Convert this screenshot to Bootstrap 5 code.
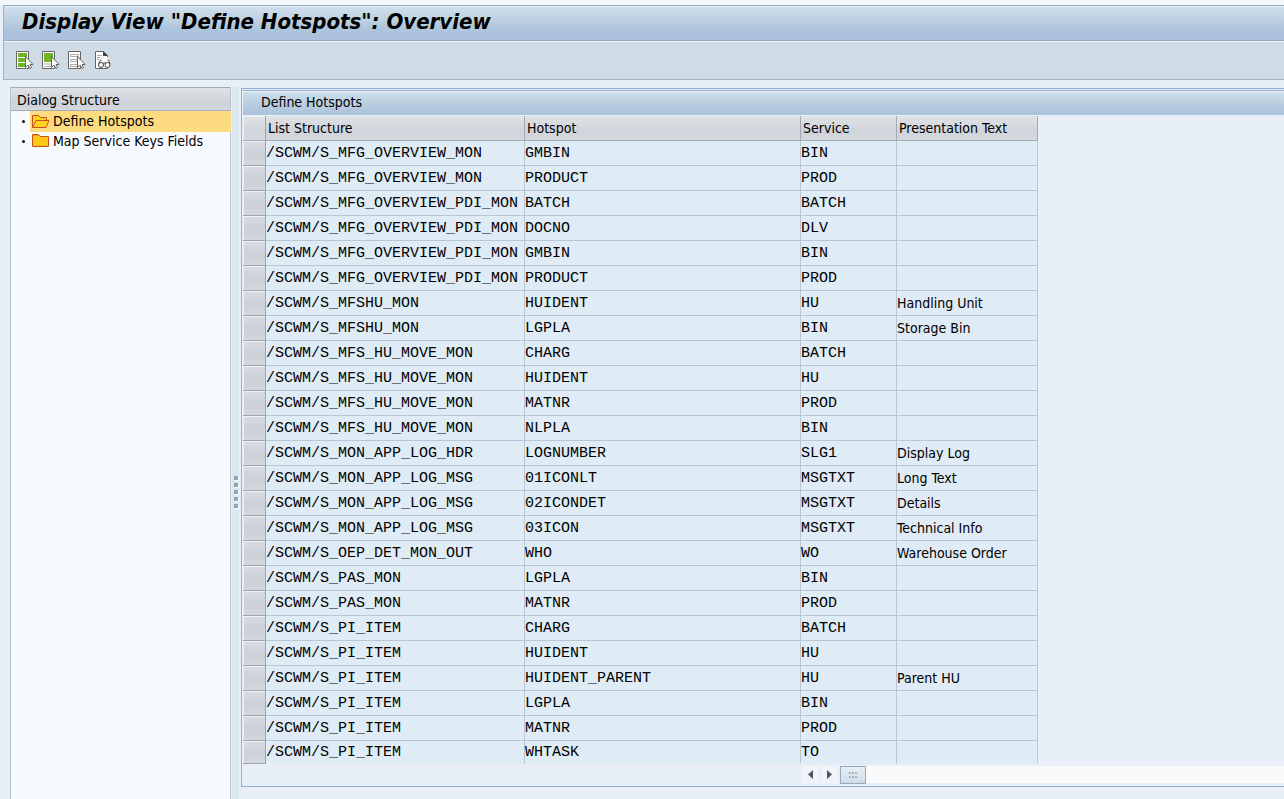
<!DOCTYPE html>
<html lang="en">
<head>
<meta charset="utf-8">
<meta name="viewport" content="width=device-width, initial-scale=1">
<title>Display View "Define Hotspots": Overview</title>
<link href="https://cdn.jsdelivr.net/npm/bootstrap@5.3.0/dist/css/bootstrap.min.css" rel="stylesheet">
<style>
  :root { --ui: "DejaVu Sans Condensed", "Noto Sans", sans-serif; }
  body { background: #e8eff7; color: #000; font: 14px/20px var(--ui); }
  .top-edge { height: 5px; background: #f5f8fc; }
  .frame { margin-left: 3px; border-left: 1px solid #9fb1c4; }
  .title-bar { height: 36px; padding-left: 18px; border-top: 1px solid #98a9be; border-bottom: 1px solid #98adc3; box-shadow: inset 0 1px #eaf1f8; background: linear-gradient(#d0dfed, #bcd0df 45%, #aec5de 65%, #abc1db); }
  .title-bar h1 { font: italic bold 22px/32px var(--ui); }
  .tools { height: 39px; padding: 0 0 2px 12px; gap: 8px; border-top: 1px solid #eef4f9; border-bottom: 1px solid #a3b4c3; background: #cfdce6; }
  .tools button { width: 18px; height: 20px; line-height: 0; }
  .work { padding-top: 7px; }
  .tree-pane { width: 221px; margin-left: 10px; background: #f7faff; border: solid #b7c3d0; border-width: 0 1px; }
  .tree-head { height: 24px; padding: 0 6px; line-height: 25px; font-size: 14px; border: 1px solid #a4abb8; border-width: 1px 0; background: linear-gradient(#dfe3e7, #d2d6db 50%, #cfd3da 80%, #d6dadd); }
  .tree-row { height: 20px; line-height: 21px; color: #000; }
  .tree-row i { width: 3px; height: 3px; margin: 0 5px 0 11px; border-radius: 50%; background: #111; }
  .tree-row span { padding-left: 1px; gap: 3px; margin-right: -1px; }
  .tree-row.current span { background: #fddb80; }
  .split { width: 7px; margin: 0 2px 0 1px; padding-top: 97px; gap: 3px; background: #dbe7ee; }
  .split i { width: 4px; height: 4px; background: #8fa3b8; box-shadow: 1px 1px #fff; }
  .grid-pane { min-width: 0; margin-top: 1px; margin-bottom: 12px; border: 1px solid #8eb1d2; border-width: 1px 0 1px 1px; padding: 1px 0 0 1px; overflow: hidden; }
  .grid-head { height: 25px; padding-left: 18px; line-height: 23px; border-top: 1px solid #8fa9c7; box-shadow: inset 0 1px #edf4fa; background: linear-gradient(#cfe0ed, #bbcfdf 50%, #aac2dc); }
  .hotspots { width: 795px; table-layout: fixed; border-collapse: separate; border-spacing: 0; margin-top: 1px; }
  .hotspots th, .hotspots td { height: 25px; padding: 0; line-height: 24px; white-space: nowrap; border: solid #b9c6d4; border-width: 0 1px 1px 0; }
  .hotspots td { background: #dfebf5; }
  .hotspots th { font-weight: 400; padding-left: 2px; border-color: #a2aab8; background: linear-gradient(#dfe3e7, #d5d9dd 45%, #cfd3da 60%, #d5d9df); }
  .hotspots td.code { font: 15px/22px "Liberation Mono", monospace; padding-top: 2px; }
  .hotspots td.pick, .hotspots th.pick { border-color: #9ba4b2; box-shadow: inset 1px 1px #eef1f4; }
  .hotspots td.pick { background: linear-gradient(#d9dde2, #cdd1d9 45%, #cdd1d9 70%, #d4d8dd); }
  .hotspots tr:last-child td { height: 23px; line-height: 20px; border-bottom-color: #dfebf5; }
  .hotspots tr:last-child td.pick { border-bottom-color: #9ba4b2; }
  .hotspots thead tr:last-child th { border-bottom-color: #a2aab8; }
  .c-pick { width: 23px; } .c-list { width: 259px; } .c-spot { width: 276px; } .c-serv { width: 96px; } .c-text { width: 141px; }
  .scroller { padding: 2px 0 0 559px; gap: 3px; }
  .arrow { width: 16px; height: 17px; background: #f1f5fa; line-height: 0; }
  .thumb { width: 26px; height: 18px; border: 1px solid #99a9bb; background: linear-gradient(#e7eff6, #d0dde8); line-height: 0; }
  .track { height: 17px; background: #fafafa; margin-left: -3px; }
</style>
<script src="https://cdn.jsdelivr.net/npm/bootstrap@5.3.0/dist/js/bootstrap.bundle.min.js" defer></script>
</head>
<body class="d-flex flex-column min-vh-100 overflow-hidden">
<div class="top-edge"></div>
<header class="frame">
  <div class="title-bar"><h1 class="m-0">Display View "Define Hotspots": Overview</h1></div>
  <div class="tools d-flex align-items-center" role="toolbar" aria-label="Application">
    <button type="button" class="btn border-0 p-0" aria-label="Select All"><svg width="18" height="20"><path fill="#fff" stroke="#666" d="M.5 1.500h12v17H.5z"/><path fill="#6fb526" d="M2 3h9v4H2zm0 5h9v4H2zm0 5h9v4H2z"/><path fill="#fff" stroke="#666" d="M9.500 6.500v11l2.500-2.500 2 3.500 1.500-1-1.500-3h3z"/></svg></button>
    <button type="button" class="btn border-0 p-0" aria-label="Select Block"><svg width="18" height="20"><path fill="#fff" stroke="#666" d="M.5 1.500h12v17H.5z"/><path fill="#6fb526" d="M2 3h9v9H2z"/><path stroke="#aaa" d="M2 14h7m-7 2.500h7"/><path fill="#fff" stroke="#666" d="M9.500 6.500v11l2.500-2.500 2 3.500 1.500-1-1.500-3h3z"/></svg></button>
    <button type="button" class="btn border-0 p-0" aria-label="Deselect All"><svg width="18" height="20"><path fill="#fff" stroke="#666" d="M.5 1.500h12v17H.5z"/><path fill="none" stroke="#aaa" d="M2.500 4.500h8v2h-8zm0 5h8v2h-8zm0 5h8v2h-8z"/><path fill="#fff" stroke="#666" d="M9.500 6.500v11l2.500-2.500 2 3.500 1.500-1-1.500-3h3z"/></svg></button>
    <button type="button" class="btn border-0 p-0" aria-label="Display details"><svg width="18" height="20"><path fill="#fff" stroke="#666" d="M1.500 1.500h8l4 4v13h-12z"/><path fill="#444" d="M9 1v5h5z"/><path stroke="#aaa" d="M3 5.500h5m-5 2h6m-6 2h4"/><path fill="none" stroke="#fff" stroke-width="3" d="M5 13l2-4 2 3h2l2-3 3 4"/><g fill="#fff" stroke="#444"><path fill="none" d="M4.500 14l2-4h1m8.500 4-1.500-4h-1M9 13h3"/><circle cx="7" cy="15" r="2.500"/><circle cx="13.500" cy="15" r="2.500"/></g></svg></button>
  </div>
</header>
<main class="work d-flex flex-grow-1">
  <nav class="tree-pane flex-shrink-0" aria-label="Dialog Structure">
    <div class="tree-head">Dialog Structure</div>
    <a href="#hotspots" class="tree-row current d-flex align-items-center text-decoration-none"><i></i><span class="d-flex flex-grow-1 align-items-center"><svg width="19" height="20"><path fill="#ffd21e" stroke="#c9501c" d="M1.500 16.500v-12h6l2 2h6v3M1.500 16.500l3.500-7h13l-3 7z"/></svg>Define Hotspots</span></a>
    <a href="#fields" class="tree-row d-flex align-items-center text-decoration-none"><i></i><span class="d-flex flex-grow-1 align-items-center"><svg width="19" height="20"><path fill="#ffc814" stroke="#c9501c" d="M1.500 15.500v-12h6l2 2h8v10z"/><path stroke="#ee9a16" d="M2 4.500h5"/></svg>Map Service Keys Fields</span></a>
  </nav>
  <div class="split d-flex flex-column align-items-center justify-content-center flex-shrink-0"><i></i><i></i><i></i><i></i><i></i></div>
  <section class="grid-pane flex-grow-1" id="hotspots">
    <div class="grid-head">Define Hotspots</div>
    <table class="hotspots">
      <colgroup><col class="c-pick"><col class="c-list"><col class="c-spot"><col class="c-serv"><col class="c-text"></colgroup>
      <thead><tr><th class="pick"></th><th scope="col">List Structure</th><th scope="col">Hotspot</th><th scope="col">Service</th><th scope="col">Presentation Text</th></tr></thead>
      <tbody id="rows"></tbody>
    </table>
    <div class="scroller d-flex align-items-start">
      <button type="button" class="arrow btn border-0 rounded-0 p-0" aria-label="Scroll left"><svg width="16" height="17"><path fill="#46586b" d="M11 4v9L6 8.500z"/></svg></button>
      <button type="button" class="arrow btn border-0 rounded-0 p-0" aria-label="Scroll right"><svg width="16" height="17"><path fill="#46586b" d="M6 4v9l5-4.500z"/></svg></button>
      <div class="thumb"><svg width="24" height="16"><path stroke="#9aaabb" stroke-width="2" stroke-dasharray="2 1" d="M8 6h8M8 10h8" opacity=".8"/></svg></div>
      <div class="track flex-grow-1"></div>
    </div>
  </section>
</main>
<script>
  const rows = `S_MFG_OVERVIEW_MON|GMBIN|BIN
S_MFG_OVERVIEW_MON|PRODUCT|PROD
S_MFG_OVERVIEW_PDI_MON|BATCH|BATCH
S_MFG_OVERVIEW_PDI_MON|DOCNO|DLV
S_MFG_OVERVIEW_PDI_MON|GMBIN|BIN
S_MFG_OVERVIEW_PDI_MON|PRODUCT|PROD
S_MFSHU_MON|HUIDENT|HU|Handling Unit
S_MFSHU_MON|LGPLA|BIN|Storage Bin
S_MFS_HU_MOVE_MON|CHARG|BATCH
S_MFS_HU_MOVE_MON|HUIDENT|HU
S_MFS_HU_MOVE_MON|MATNR|PROD
S_MFS_HU_MOVE_MON|NLPLA|BIN
S_MON_APP_LOG_HDR|LOGNUMBER|SLG1|Display Log
S_MON_APP_LOG_MSG|01ICONLT|MSGTXT|Long Text
S_MON_APP_LOG_MSG|02ICONDET|MSGTXT|Details
S_MON_APP_LOG_MSG|03ICON|MSGTXT|Technical Info
S_OEP_DET_MON_OUT|WHO|WO|Warehouse Order
S_PAS_MON|LGPLA|BIN
S_PAS_MON|MATNR|PROD
S_PI_ITEM|CHARG|BATCH
S_PI_ITEM|HUIDENT|HU
S_PI_ITEM|HUIDENT_PARENT|HU|Parent HU
S_PI_ITEM|LGPLA|BIN
S_PI_ITEM|MATNR|PROD
S_PI_ITEM|WHTASK|TO`.split("\n").map(line => line.split("|"));
  document.getElementById("rows").innerHTML = rows.map(([list, spot, service, text = ""]) =>
    `<tr><td class="pick"></td><td class="code">/SCWM/${list}</td><td class="code">${spot}</td><td class="code">${service}</td><td>${text}</td></tr>`).join("");
</script>
</body>
</html>
